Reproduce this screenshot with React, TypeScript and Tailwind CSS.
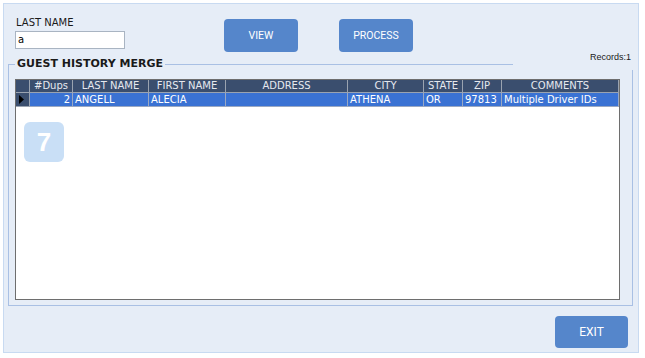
import React from 'react';

const columns = [
  { key: 'dups', title: '#Dups', align: 'text-right' },
  { key: 'last', title: 'LAST NAME', align: 'text-left' },
  { key: 'first', title: 'FIRST NAME', align: 'text-left' },
  { key: 'address', title: 'ADDRESS', align: 'text-left' },
  { key: 'city', title: 'CITY', align: 'text-left' },
  { key: 'state', title: 'STATE', align: 'text-left' },
  { key: 'zip', title: 'ZIP', align: 'text-left' },
  { key: 'comments', title: 'COMMENTS', align: 'text-left' },
];

const rows: Record<string, string>[] = [
  {
    dups: '2',
    last: 'ANGELL',
    first: 'ALECIA',
    address: '',
    city: 'ATHENA',
    state: 'OR',
    zip: '97813',
    comments: 'Multiple Driver IDs',
  },
];

const gridCols = 'grid grid-cols-[14px_43px_76px_77px_122px_76px_39px_39px_117px]';

// ゲスト履歴マージ画面
export default function App() {
  return (
    <div className="w-[645px] h-[358px] bg-white pt-[3px] pl-[3px] font-['DejaVu_Sans',sans-serif]">
      <div className="w-[636px] h-[350px] border border-[#c8daf1] bg-[#e6edf7] flex flex-col">
        {/* 検索エリア */}
        <div className="h-[48px] flex items-start">
          <div className="ml-[11px] pt-[12px] flex flex-col">
            <label className="text-[10px] leading-[13px] text-[#1a1a1a] pl-[1px]">LAST NAME</label>
            <div className="mt-[2px] w-[110px] h-[18px] bg-white border border-[#a9b4c2] text-[10px] leading-[16px] pl-[2px] text-black">
              a
            </div>
          </div>
          <button className="ml-[99px] mt-[15px] w-[74px] h-[33px] rounded-[4px] bg-[#5586cb] text-white text-[10.5px] font-['Roboto',sans-serif]">
            VIEW
          </button>
          <button className="ml-[41px] mt-[15px] w-[74px] h-[33px] rounded-[4px] bg-[#5586cb] text-white text-[10.5px] font-['Roboto',sans-serif]">
            PROCESS
          </button>
        </div>

        {/* グループボックス */}
        <div className="ml-[4px] w-[625px] flex flex-col">
          <div className="h-[18px] flex">
            <div className="self-end w-[7px] h-[6px] border-t border-l border-[#a9c0e4]" />
            <span className="self-end px-[2px] text-[11px] leading-[13px] font-bold text-[#1a1a1a]">
              GUEST HISTORY MERGE
            </span>
            <div className="self-end flex-1 h-[6px] border-t border-[#a9c0e4]" />
            <div className="w-[120px] flex justify-end">
              <span className="text-[9px] leading-[12px] mt-[-1px] mr-[2px] font-['Liberation_Sans',sans-serif] text-[#1a1a1a]">
                Records:1
              </span>
            </div>
          </div>
          <div className="h-[236px] border-x border-b border-[#a9c0e4] pt-[9px] pl-[6px] pb-[5px]">
            {/* データグリッド */}
            <div className="w-[605px] h-[221px] border border-[#6e6e6e] bg-white flex flex-col text-[10px]">
              <div className={`${gridCols} h-[13px] bg-[#3a4e6e] text-[#e6e9ee] leading-[12px]`}>
                <div className="border-r border-b border-[#9aa3b0]" />
                {columns.map((c) => (
                  <div key={c.key} className="border-r border-b border-[#9aa3b0] text-center truncate">
                    {c.title}
                  </div>
                ))}
              </div>
              {rows.map((r, i) => (
                <div key={i} className={`${gridCols} h-[14px] leading-[13px] text-white`}>
                  <div className="bg-[#3a4e6e] border-r border-b border-[#9aa3b0] flex items-center pl-[3px]">
                    <svg width="5" height="9" viewBox="0 0 5 9">
                      <path d="M0 0 L5 4.5 L0 9 Z" fill="#000" />
                    </svg>
                  </div>
                  {columns.map((c) => (
                    <div
                      key={c.key}
                      className={`bg-[#3a72d3] border-r border-b border-[#9aa8c2] px-[2px] truncate ${c.align}`}
                    >
                      {r[c.key]}
                    </div>
                  ))}
                </div>
              ))}
              <div className="ml-[8px] mt-[15px] w-[40px] h-[40px] rounded-[6px] bg-[#c9dff6] flex items-center justify-center text-white text-[26px] font-bold font-['Liberation_Sans',sans-serif]">
                7
              </div>
            </div>
          </div>
        </div>

        {/* 終了ボタン */}
        <div className="flex justify-end mt-[10px] mr-[10px]">
          <button className="w-[73px] h-[32px] rounded-[4px] bg-[#5586cb] text-white text-[12px] font-['Roboto',sans-serif]">
            EXIT
          </button>
        </div>
      </div>
    </div>
  );
}
